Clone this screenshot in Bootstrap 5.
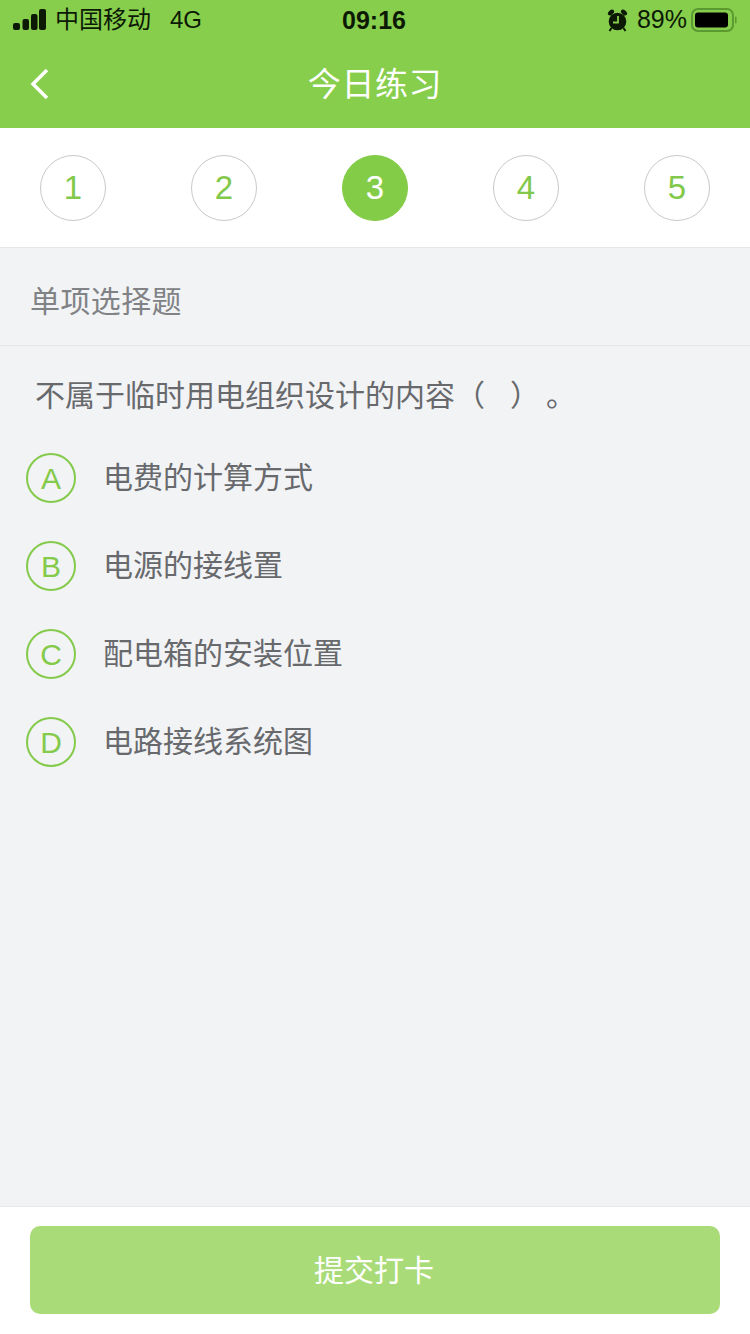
<!DOCTYPE html>
<html lang="zh">

<head>
    <meta charset="UTF-8">
    <meta name="viewport" content="width=device-width, initial-scale=1.0">
    <title>今日练习</title>
    <link href="https://cdn.jsdelivr.net/npm/bootstrap@5.3.0/dist/css/bootstrap.min.css" rel="stylesheet">
    <style>
        html, body { height: 100%; }
        body { background: #f2f3f5; font-family: "Liberation Sans", "Noto Sans CJK SC", sans-serif; color: #67696c; }
        .page-wrap { width: 750px; height: 1334px; }
        .top-head { background: #87ce4c; height: 128px; }
        .status-row { height: 40px; padding: 0 12px 0 13px; font-size: 24px; color: #0c1a05; }
        .status-time { font-weight: 700; font-size: 25px; left: 342px; top: 6px; line-height: 28px; }
        .carrier { margin-left: 9px; }
        .net { margin-left: 19px; }
        .top-right { font-size: 25px; }
        .title-row { height: 88px; padding-top: 2px; }
        .title-text { color: #fff; font-size: 33px; letter-spacing: .6px; }
        .back-btn { left: 30px; top: 28px; }
        .steps { height: 120px; padding: 0 40px; border-bottom: 1px solid #e6e7e9; }
        .step-dot { width: 66px; height: 66px; border: 1px solid #c9c9c9; color: #82c84a; font-size: 33px; }
        .step-dot.on { background: #83cc47; border-color: #83cc47; color: #fff; }
        .kind-row { height: 98px; padding: 10px 0 0 30px; font-size: 30px; letter-spacing: .4px; color: #808285; border-bottom: 1px solid #e6e7e9; }
        .ask-row { padding: 30px 0 0 35px; font-size: 30px; line-height: 40px; height: 88px; text-spacing-trim: space-all; }
        .close-br { margin-right: 6px; }
        .opt-row { height: 88px; padding-left: 26px; font-size: 30px; }
        .opt-mark { width: 50px; height: 50px; border: 2px solid #84ca4b; color: #84ca4b; margin-right: 27px; font-size: 30px; }
        .opt-text { padding-bottom: 2px; }
        .foot-bar { height: 128px; background: #fff; border-top: 1px solid #e6e7e9; padding: 19px 30px 0; }
        .submit-btn { width: 100%; height: 88px; background: #a9dc79; border: 0; border-radius: 10px; color: #fff; font-size: 30px; padding-right: 14px; }
        .submit-btn:hover { background: #a9dc79; color: #fff; }
    </style>
</head>

<body>
    <div class="page-wrap d-flex flex-column position-relative">
        <div class="top-head">
            <div class="status-row d-flex align-items-center position-relative">
                <svg width="33" height="22" viewBox="0 0 33 22" fill="#0c1a05">
                    <rect x="0" y="14" width="7" height="7" rx="2"/>
                    <rect x="9.500" y="10" width="6.500" height="11" rx="2"/>
                    <rect x="18" y="5" width="6.500" height="16" rx="2"/>
                    <rect x="26" y="0" width="7" height="21" rx="2"/>
                </svg>
                <span class="carrier">中国移动</span>
                <span class="net">4G</span>
                <span class="status-time position-absolute">09:16</span>
                <div class="top-right ms-auto d-flex align-items-center">
                    <svg width="22" height="23" viewBox="0 0 22 23" fill="#0c1a05">
                        <circle cx="10.500" cy="12.500" r="8.800"/>
                        <ellipse cx="4" cy="3.500" rx="3.500" ry="2.300" transform="rotate(-40 4 3.500)"/>
                        <ellipse cx="17" cy="3.500" rx="3.500" ry="2.300" transform="rotate(40 17 3.500)"/>
                        <path d="M4.500 19 L2.500 22 M16.500 19 L18.500 22" stroke="#0c1a05" stroke-width="2"/>
                        <path d="M11 7 V13.500 H6" fill="none" stroke="#87ce4c" stroke-width="1.800"/>
                    </svg>
                    <span class="ms-2">89%</span>
                    <svg class="ms-1" width="47" height="24" viewBox="0 0 47 24">
                        <rect x="1" y="1" width="41" height="22" rx="6" fill="none" stroke="#5a9a30" stroke-width="2"/>
                        <rect x="4" y="4.500" width="33" height="15" rx="3" fill="#000"/>
                        <rect x="44" y="8.500" width="1.500" height="7" rx=".7" fill="#5a9a30"/>
                    </svg>
                </div>
            </div>
            <div class="title-row d-flex align-items-center justify-content-center position-relative">
                <svg class="back-btn position-absolute" width="20" height="32" viewBox="0 0 20 32" fill="none" stroke="#fff" stroke-width="3.500">
                    <path d="M17 2 L3 16 L17 30"/>
                </svg>
                <span class="title-text">今日练习</span>
            </div>
        </div>

        <div class="steps bg-white d-flex align-items-center justify-content-between">
            <div class="step-dot rounded-circle d-flex align-items-center justify-content-center">1</div>
            <div class="step-dot rounded-circle d-flex align-items-center justify-content-center">2</div>
            <div class="step-dot on rounded-circle d-flex align-items-center justify-content-center">3</div>
            <div class="step-dot rounded-circle d-flex align-items-center justify-content-center">4</div>
            <div class="step-dot rounded-circle d-flex align-items-center justify-content-center">5</div>
        </div>

        <div class="kind-row d-flex align-items-center">单项选择题</div>
        <div class="ask-row">不属于临时用电组织设计的内容（&nbsp;&nbsp;&nbsp;<span class="close-br">）</span>。</div>

        <div class="opt-row d-flex align-items-center">
            <span class="opt-mark rounded-circle d-flex align-items-center justify-content-center">A</span>
            <span class="opt-text">电费的计算方式</span>
        </div>
        <div class="opt-row d-flex align-items-center">
            <span class="opt-mark rounded-circle d-flex align-items-center justify-content-center">B</span>
            <span class="opt-text">电源的接线置</span>
        </div>
        <div class="opt-row d-flex align-items-center">
            <span class="opt-mark rounded-circle d-flex align-items-center justify-content-center">C</span>
            <span class="opt-text">配电箱的安装位置</span>
        </div>
        <div class="opt-row d-flex align-items-center">
            <span class="opt-mark rounded-circle d-flex align-items-center justify-content-center">D</span>
            <span class="opt-text">电路接线系统图</span>
        </div>

        <div class="foot-bar mt-auto">
            <button type="button" class="btn submit-btn">提交打卡</button>
        </div>
    </div>
</body>

</html>
